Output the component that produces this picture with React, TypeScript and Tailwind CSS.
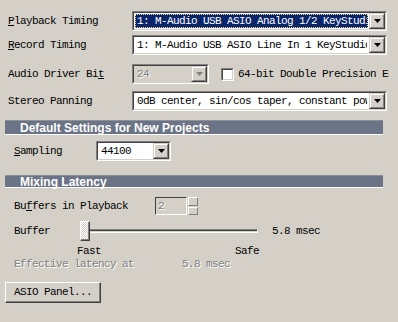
import React from 'react';

const mono = "font-['Liberation_Mono',monospace] text-[11px] tracking-[-0.6px] leading-none";
const emboss = 'text-[#808080] [text-shadow:1px_1px_0_#fff]';

const Sunken: React.FC<{ className?: string; children?: React.ReactNode; inner?: string }> = ({ className = '', children, inner = 'bg-white' }) => (
  <div className={`shrink-0 border border-t-[#808080] border-l-[#808080] border-b-white border-r-white ${className}`}>
    <div className={`h-full w-full border border-t-[#404040] border-l-[#404040] border-b-[#d4d0c8] border-r-[#d4d0c8] flex ${inner}`}>
      {children}
    </div>
  </div>
);

const Arrow: React.FC<{ disabled?: boolean }> = ({ disabled }) => (
  <div className="w-[16px] h-full border border-t-[#d4d0c8] border-l-[#d4d0c8] border-b-[#404040] border-r-[#404040] bg-[#d4d0c8]">
    <div className="h-full w-full border border-t-white border-l-white border-b-[#808080] border-r-[#808080] flex items-center justify-center">
      <svg width="7" height="4" viewBox="0 0 7 4">
        <path d="M0 0h7L3.5 4z" fill={disabled ? '#808080' : '#000'} />
      </svg>
    </div>
  </div>
);

const Combo: React.FC<{ text: string; className: string; selected?: boolean; disabled?: boolean }> = ({ text, className, selected, disabled }) => (
  <Sunken className={className} inner={disabled ? 'bg-[#d4d0c8]' : 'bg-white'}>
    <div className="flex-1 min-w-0 p-[1px] flex">
      <div
        className={`flex-1 min-w-0 overflow-hidden whitespace-nowrap flex items-center pl-[1px] ${mono} ${
          selected ? 'bg-[#0a246a] text-white border border-dotted border-[#f5db95]' : disabled ? `${emboss} border border-transparent` : 'text-black border border-transparent'
        }`}
      >
        {text}
      </div>
    </div>
    <Arrow disabled={disabled} />
  </Sunken>
);

const Header: React.FC<{ title: string; className?: string }> = ({ title, className = '' }) => (
  <div className={`mx-[5px] w-[378px] bg-[#6b7387] border-t border-t-[#8a8f9a] border-b border-b-white flex items-center pl-[15px] ${className}`}>
    <span className="font-['Liberation_Sans',sans-serif] font-bold text-[12px] text-white leading-none">{title}</span>
  </div>
);

export default function App() {
  return (
    <div className="w-[398px] h-[322px] bg-[#d4d0c8] overflow-hidden text-black flex flex-col">
      <div className="flex items-center h-[20px] mt-[11px]">
        <div className={`w-[132px] shrink-0 pl-[8px] ${mono}`}><u>P</u>layback Timing</div>
        <Combo className="w-[255px] h-[20px]" text="1: M-Audio USB ASIO Analog 1/2 KeyStudio" selected />
      </div>
      <div className="flex items-center h-[20px] mt-[4px]">
        <div className={`w-[132px] shrink-0 pl-[8px] ${mono}`}><u>R</u>ecord Timing</div>
        <Combo className="w-[255px] h-[20px]" text="1: M-Audio USB ASIO Line In 1 KeyStudio" />
      </div>
      <div className="flex items-center h-[20px] mt-[9px]">
        <div className={`w-[132px] shrink-0 pl-[8px] ${mono}`}>Audio Driver Bi<u>t</u></div>
        <Combo className="w-[77px] h-[20px]" text="24" disabled />
        <Sunken className="ml-[12px] w-[13px] h-[13px]" />
        <div className={`ml-[4px] w-[151px] shrink-0 overflow-hidden whitespace-nowrap ${mono}`}>64-bit Double Precision Engine</div>
      </div>
      <div className="flex items-center h-[20px] mt-[7px]">
        <div className={`w-[132px] shrink-0 pl-[8px] ${mono}`}>Stereo Panning</div>
        <Combo className="w-[255px] h-[20px]" text="0dB center, sin/cos taper, constant power" />
      </div>

      <Header title="Default Settings for New Projects" className="mt-[9px] h-[15px]" />

      <div className="flex items-center h-[20px] mt-[6px]">
        <div className={`w-[96px] shrink-0 pl-[14px] ${mono}`}><u>S</u>ampling</div>
        <Combo className="w-[75px] h-[20px]" text="44100" />
      </div>

      <Header title="Mixing Latency" className="mt-[14px] h-[13px]" />

      <div className="flex items-center h-[18px] mt-[9px]">
        <div className={`w-[155px] shrink-0 pl-[14px] ${mono}`}>Bu<u>f</u>fers in Playback</div>
        <div className="w-[32px] h-[18px] border border-t-[#404040] border-l-[#404040] border-b-white border-r-white flex items-center pl-[2px]">
          <span className={`${mono} ${emboss}`}>2</span>
        </div>
        <div className="ml-[1px] w-[10px] h-[18px] flex flex-col gap-[1px]">
          <div className="flex-1 border border-t-white border-l-white border-b-[#808080] border-r-[#808080]" />
          <div className="flex-1 border border-t-white border-l-white border-b-[#808080] border-r-[#808080]" />
        </div>
      </div>

      <div className="flex items-center h-[20px] mt-[6px]">
        <div className={`w-[80px] shrink-0 pl-[14px] ${mono}`}>Buffer</div>
        <div className="relative w-[178px] h-[20px] flex items-center">
          <div className="w-full h-[4px] border border-t-[#808080] border-l-[#808080] border-b-white border-r-white">
            <div className="h-full w-full border-t border-t-[#404040]" />
          </div>
          <div className="absolute left-0 top-0 w-[10px] h-[20px] border border-t-white border-l-white border-b-[#404040] border-r-[#404040]">
            <div className="h-full w-full border-b border-r border-b-[#808080] border-r-[#808080] bg-[repeating-conic-gradient(#ffffff_0_25%,#d4d0c8_0_50%)] bg-[length:2px_2px]" />
          </div>
        </div>
        <div className={`ml-[14px] ${mono}`}>5.8 msec</div>
      </div>

      <div className="flex h-[12px] mt-[4px] items-center">
        <div className={`ml-[77px] ${mono}`}>Fast</div>
        <div className={`ml-[134px] ${mono}`}>Safe</div>
      </div>

      <div className="flex h-[12px] mt-[1px] items-center">
        <div className={`pl-[14px] w-[182px] shrink-0 ${mono} ${emboss}`}>Effective latency at</div>
        <div className={`${mono} ${emboss}`}>5.8 msec</div>
      </div>

      <div className="ml-[5px] mt-[12px] w-[96px] h-[21px] border border-t-white border-l-white border-b-[#404040] border-r-[#404040]">
        <div className="h-full w-full border-b border-r border-b-[#808080] border-r-[#808080] flex items-center pl-[8px]">
          <span className={mono}>ASIO Panel...</span>
        </div>
      </div>
    </div>
  );
}
